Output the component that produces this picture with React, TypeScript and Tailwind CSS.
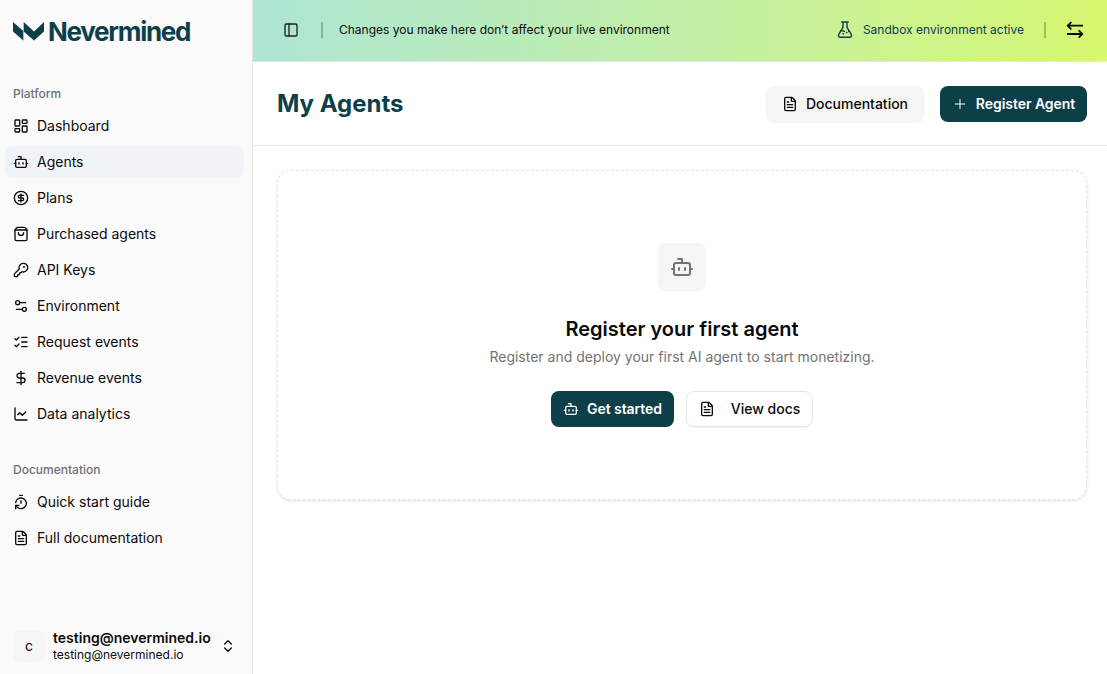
import React from "react";
import {
  Bot, CircleDollarSign, ShoppingBag, KeyRound, Settings2, ListChecks, DollarSign, ChartLine,
  LayoutDashboard, TimerReset, FileText, ChevronsUpDown, PanelLeft, Plus,
} from "lucide-react";
import type { LucideIcon } from "lucide-react";

type Item = { label: string; icon: LucideIcon; active?: boolean };

const platform: Item[] = [
  { label: "Dashboard", icon: LayoutDashboard },
  { label: "Agents", icon: Bot, active: true },
  { label: "Plans", icon: CircleDollarSign },
  { label: "Purchased agents", icon: ShoppingBag },
  { label: "API Keys", icon: KeyRound },
  { label: "Environment", icon: Settings2 },
  { label: "Request events", icon: ListChecks },
  { label: "Revenue events", icon: DollarSign },
  { label: "Data analytics", icon: ChartLine },
];
const docs: Item[] = [
  { label: "Quick start guide", icon: TimerReset },
  { label: "Full documentation", icon: FileText },
];

function Group({ title, items }: { title: string; items: Item[] }) {
  return (
    <section>
      <h2 className="flex h-8 items-center px-2 text-xs font-medium text-[#717171]">{title}</h2>
      <ul className="flex flex-col gap-1">
        {items.map(({ label, icon: Icon, active }) => (
          <li key={label} className={`flex h-8 items-center gap-2 rounded-lg px-2 text-sm ${active ? "bg-[#f0f4f9]" : ""}`}>
            <Icon className="size-4 shrink-0" />
            <span>{label}</span>
          </li>
        ))}
      </ul>
    </section>
  );
}

export default function App() {
  return (
    <div className="flex h-screen w-full overflow-hidden bg-white font-['Inter',sans-serif] text-[#0a0a0a]">
      <aside className="flex w-[253px] shrink-0 flex-col border-r border-[#e5e5e5] bg-[#fafafa] pr-2 pl-[5px]">
        <div className="flex h-[62px] items-center gap-1 pl-2 text-[#0d3f48]">
          <svg className="h-[19px] w-[31px] shrink-0" viewBox="0 0 31 19" fill="currentColor">
            <path d="M0 0l10.300 9V18.500L0 9.500z" />
            <path d="M10.700 0L21 9.500 31 0v9.500L21 18.500 10.700 9.500z" />
          </svg>
          <span className="pt-0.5 text-[26px] leading-none font-bold tracking-[-1.3px]">Nevermined</span>
        </div>
        <nav className="mt-4 flex flex-col gap-6">
          <Group title="Platform" items={platform} />
          <Group title="Documentation" items={docs} />
        </nav>
        <div className="mt-auto mb-1 flex h-12 items-center gap-2 px-2">
          <div className="flex size-8 items-center justify-center rounded-lg bg-[#f5f5f5] text-sm">c</div>
          <div className="flex flex-1 flex-col">
            <span className="text-sm leading-[17.500px] font-semibold">testing@nevermined.io</span>
            <span className="text-xs leading-4">testing@nevermined.io</span>
          </div>
          <ChevronsUpDown className="size-4" />
        </div>
      </aside>
      <div className="flex min-w-0 flex-1 flex-col">
        <header className="flex h-[62px] items-center border-b border-[#e5e5e5] bg-linear-to-r from-[#ade5d3] to-[#d7f76f] pr-[23px] pb-px pl-[30px] text-xs">
          <PanelLeft className="size-4 text-[#222]" />
          <div className="ml-[22px] h-4 w-0.5 bg-[#0d3f48]/30" />
          <span className="ml-4 text-[#0a0a0a]">Changes you make here don’t affect your live environment</span>
          <div className="ml-auto flex items-center text-[#0d3f48]">
            <svg className="h-[18px] w-4" viewBox="0 0 16 18" fill="none" stroke="currentColor" strokeWidth="1.400" strokeLinecap="round" strokeLinejoin="round">
              <path d="M4.700 1h6.600M6 1v5.300L1.900 13.200c-1 1.700-.2 3.100 1.600 3.100h9c1.800 0 2.600-1.400 1.600-3.100L10 6.300V1" />
              <path d="M4 9.800c1.500-.6 2.500.2 3.500.5M9.500 11.500h.4M6 12.800h.4M11.500 10.500l.5-.3" />
            </svg>
            <span className="ml-2.5">Sandbox environment active</span>
            <div className="ml-5 h-4 w-0.5 bg-[#0d3f48]/30" />
            <svg className="ml-5 h-[18px] w-[18px] text-[#0a0a0a]" viewBox="0 0 18 18" fill="none" stroke="currentColor" strokeWidth="1.800">
              <path d="M5.300 1.100L1.700 4.700l3.600 3.600M1.700 4.700H17M12.700 9.400l3.600 3.600-3.600 3.600M16.300 13H1" />
            </svg>
          </div>
        </header>
        <div className="flex h-[84px] items-center border-b border-[#e5e5e5] pr-5 pl-6">
          <h1 className="text-2xl font-bold text-[#0d3f48]">My Agents</h1>
          <button className="ml-auto flex h-9 w-[158px] items-center justify-center gap-2 rounded-lg bg-[#f5f5f5] text-sm font-medium shadow-xs">
            <FileText className="size-4" />Documentation
          </button>
          <button className="ml-4 flex h-9 w-[147px] items-center justify-center gap-2 rounded-lg bg-[#0d3f48] text-sm font-semibold text-white">
            <Plus className="size-4 stroke-[1.5]" /><span className="tracking-[-0.05px]">Register Agent</span>
          </button>
        </div>
        <main className="pt-6 pr-5 pl-6">
          <div className="flex h-[330px] flex-col items-center rounded-[14px] border border-dashed border-[#e5e5e5] pt-[72px] shadow-sm">
            <div className="flex size-12 items-center justify-center rounded-lg bg-[#f5f5f5] text-[#737373]"><Bot className="size-6" /></div>
            <h2 className="mt-6 text-xl leading-7 font-semibold">Register your first agent</h2>
            <p className="mt-1 text-sm text-[#737373]">Register and deploy your first AI agent to start monetizing.</p>
            <div className="mt-6 flex gap-3 text-sm">
              <button className="flex h-9 w-[123px] items-center justify-center gap-2 rounded-lg bg-[#0d3f48] font-semibold text-white"><Bot className="size-4" /><span className="tracking-[-0.05px]">Get started</span></button>
              <button className="flex h-9 w-[127px] items-center justify-center gap-4 rounded-lg border border-[#e5e5e5] font-medium shadow-xs"><FileText className="size-4" />View docs</button>
            </div>
          </div>
        </main>
      </div>
    </div>
  );
}
